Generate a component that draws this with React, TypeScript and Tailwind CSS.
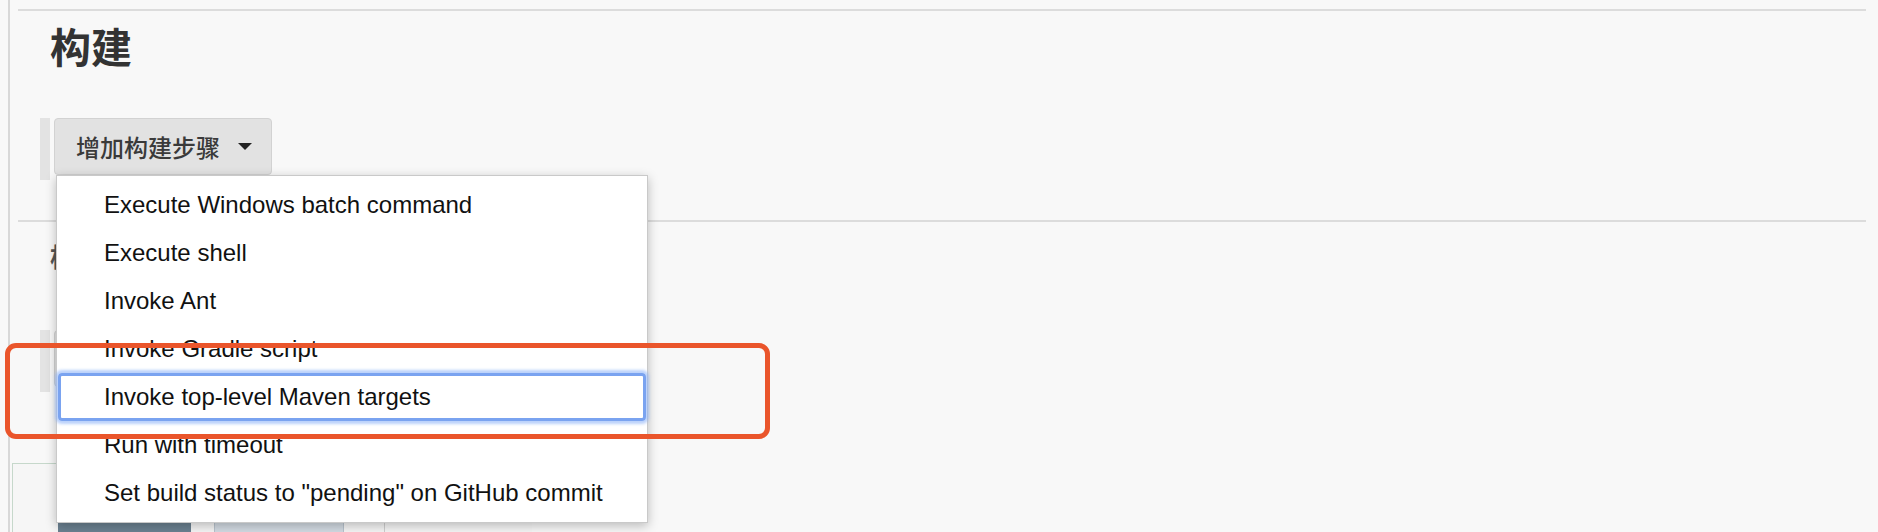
const items = [
  'Execute Windows batch command',
  'Execute shell',
  'Invoke Ant',
  'Invoke Gradle script',
  'Invoke top-level Maven targets',
  'Run with timeout',
  'Set build status to "pending" on GitHub commit',
];

const SELECTED = 4;

function Caret() {
  return (
    <svg width="14" height="8" viewBox="0 0 14 8" className="shrink-0">
      <path d="M0 0 L14 0 L7 7 Z" fill="#222" />
    </svg>
  );
}

export default function App() {
  return (
    <div
      className="relative flex h-[532px] w-[1878px] overflow-hidden bg-[#f8f8f8] pl-[8px]"
      style={{ fontFamily: '"Liberation Sans", "Noto Sans CJK SC", sans-serif' }}
    >
      {/* page column */}
      <div className="flex flex-1 flex-col border-l-2 border-[#d8d8d8] pt-[9px]">
        {/* 构建 section */}
        <div className="ml-[8px] mr-[12px] border-t-2 border-[#dcdcdc]">
          <h2
            className="ml-[32px] mt-[10px] text-[41px] font-bold leading-[48px] text-[#333]"
            style={{ fontFamily: '"Noto Sans CJK SC", sans-serif' }}
          >
            构建
          </h2>

          <div className="ml-[22px] mt-[49px] flex items-start">
            <div className="h-[62px] w-[10px] bg-[#e3e3e3]" />
            <div className="relative ml-[4px]">
              <button
                className="flex h-[57px] w-[218px] items-center rounded-[4px] border border-[#d2d2d2] bg-[#e2e2e2] pl-[21px] text-[24px] font-medium text-[#3a3a3a]"
                style={{ fontFamily: '"Noto Sans CJK SC", sans-serif' }}
              >
                <span className="leading-none">增加构建步骤</span>
                <span className="ml-[18px]">
                  <Caret />
                </span>
              </button>

              {/* dropdown menu */}
              <div className="absolute left-[2px] top-[57px] z-10 w-[592px] border border-[#c9c9c9] bg-white py-[5px] shadow-[0_3px_10px_rgba(0,0,0,0.25)]">
                {items.map((label, i) =>
                  i === SELECTED ? (
                    <div
                      key={label}
                      className="mx-[1px] h-[48px] rounded-[4px] border-[3px] border-[#7aa3f0] pl-[43px] text-[24px] leading-[42px] text-[#111] shadow-[0_0_3px_3px_rgba(140,178,248,0.6)]"
                    >
                      {label}
                    </div>
                  ) : (
                    <div key={label} className="h-[48px] pl-[47px] text-[24px] leading-[48px] text-[#111]">
                      {label}
                    </div>
                  )
                )}
              </div>
            </div>
          </div>
        </div>

        {/* 构建后操作 section */}
        <div className="ml-[8px] mr-[12px] mt-[40px] border-t-2 border-[#dcdcdc]">
          <h3
            className="ml-[32px] mt-[18px] text-[26px] font-bold leading-[32px] text-[#555]"
            style={{ fontFamily: '"Noto Sans CJK SC", sans-serif' }}
          >
            构建后操作
          </h3>
          <div className="ml-[22px] mt-[58px] flex items-start">
            <div className="h-[62px] w-[10px] bg-[#e3e3e3]" />
            <div className="ml-[4px] h-[57px] w-[250px] rounded-[4px] border border-[#d2d2d2] bg-[#e2e2e2]" />
          </div>
        </div>

        {/* bottom button bar */}
        <div className="ml-[2px] mt-[71px] flex h-[80px] w-[520px] shrink-0 items-start border-l border-t border-[#c6d8cb] bg-[#f6f6f6] pl-[45px] pt-[36px]">
          <div className="h-[40px] w-[133px] rounded-[3px] bg-[#6b8191]" />
          <div className="ml-[23px] h-[40px] w-[130px] rounded-[3px] border border-[#b9c4ce] bg-[#d3dbe3]" />
          <div className="ml-[40px] h-[40px] w-px bg-[#cfcfcf]" />
        </div>
      </div>

      {/* annotation */}
      <div className="pointer-events-none absolute left-[5px] top-[343px] z-20 h-[96px] w-[765px] rounded-[11px] border-[5px] border-[#ea552b]" />
    </div>
  );
}
